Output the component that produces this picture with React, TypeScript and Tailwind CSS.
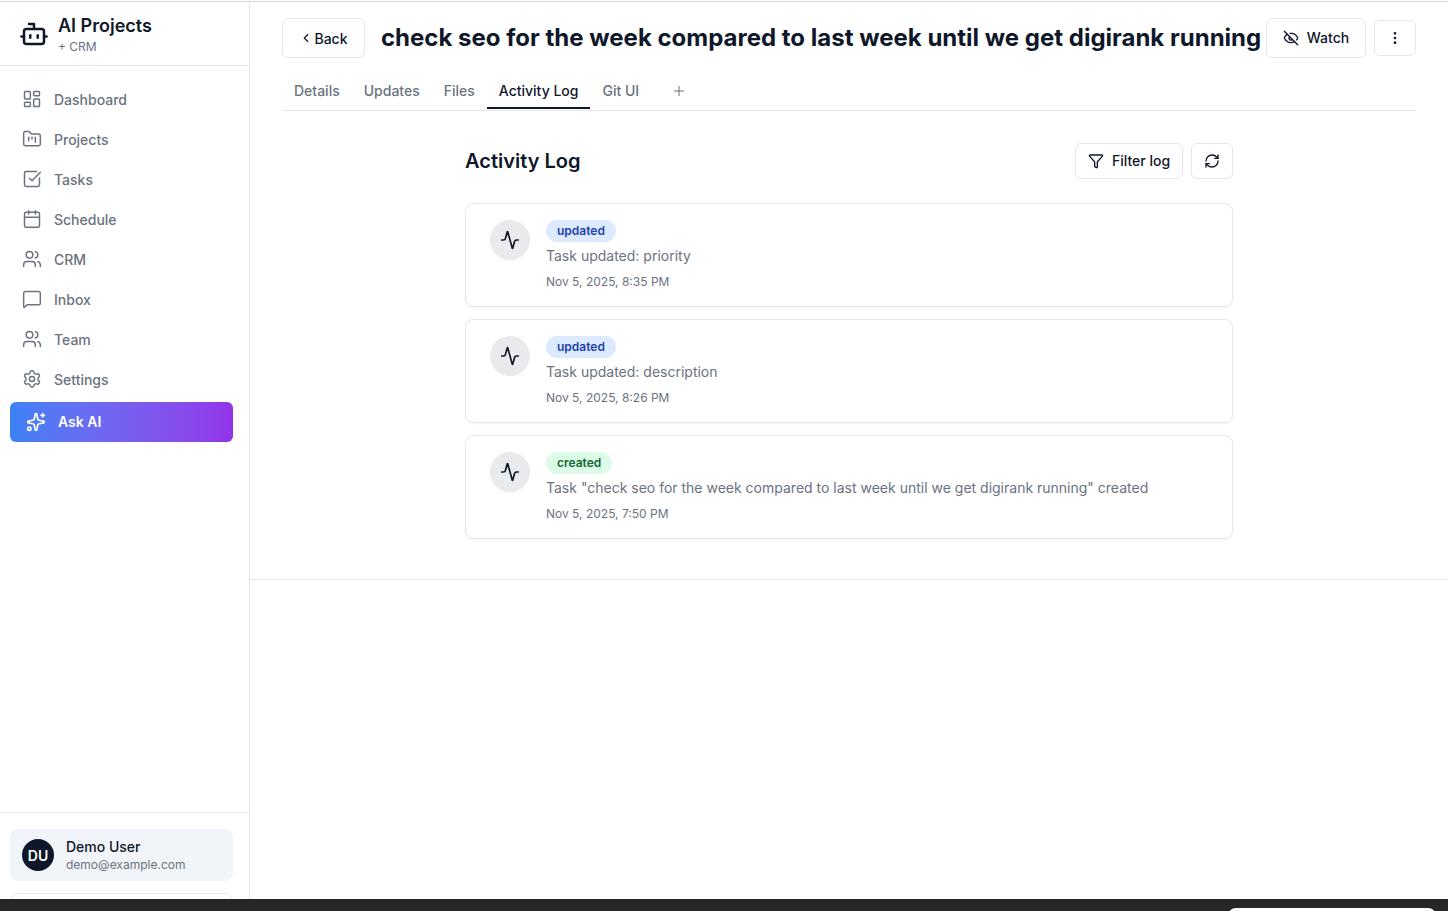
import {
  Activity,
  Bot,
  Calendar,
  ChevronLeft,
  EllipsisVertical,
  EyeOff,
  Filter,
  FolderKanban,
  LayoutDashboard,
  MessageSquare,
  Plus,
  RefreshCw,
  Settings,
  Sparkles,
  SquareCheckBig,
  Users,
} from "lucide-react";

const navItems = [
  { label: "Dashboard", icon: LayoutDashboard },
  { label: "Projects", icon: FolderKanban },
  { label: "Tasks", icon: SquareCheckBig },
  { label: "Schedule", icon: Calendar },
  { label: "CRM", icon: Users },
  { label: "Inbox", icon: MessageSquare },
  { label: "Team", icon: Users },
  { label: "Settings", icon: Settings },
];

const tabs = ["Details", "Updates", "Files", "Activity Log", "Git UI"];

const logs = [
  {
    kind: "updated",
    text: "Task updated: priority",
    date: "Nov 5, 2025, 8:35 PM",
  },
  {
    kind: "updated",
    text: "Task updated: description",
    date: "Nov 5, 2025, 8:26 PM",
  },
  {
    kind: "created",
    text: 'Task "check seo for the week compared to last week until we get digirank running" created',
    date: "Nov 5, 2025, 7:50 PM",
  },
];

const Sidebar = () => (
  <aside className="flex w-[250px] shrink-0 flex-col border-r border-[#e5e7eb] bg-white">
    <div className="flex h-[64px] shrink-0 items-center gap-[9px] border-b border-[#e5e7eb] pl-[19px]">
      <Bot size={30} strokeWidth={2} className="text-[#0f172a]" />
      <div className="pt-[2px]">
        <div className="text-[18px] leading-[24px] font-semibold text-[#0f172a]">
          AI Projects
        </div>
        <div className="mt-[1px] text-[12px] leading-[16px] text-[#6b7280]">
          + CRM
        </div>
      </div>
    </div>
    <nav className="flex flex-col pt-[13px] pl-[10px] pr-[16px]">
      {navItems.map((item) => (
        <div
          key={item.label}
          className="flex h-[40px] items-center gap-[12px] pl-[12px] text-[14px] font-medium text-[#6b7280]"
        >
          <item.icon size={20} strokeWidth={1.75} />
          <span>{item.label}</span>
        </div>
      ))}
      <div className="mt-[3px] flex h-[40px] items-center gap-[12px] rounded-[6px] bg-gradient-to-r from-[#3b82f6] to-[#9333ea] pl-[16px] text-[14px] font-semibold text-white">
        <Sparkles size={20} strokeWidth={2} />
        <span className="-mt-[1px]">Ask AI</span>
      </div>
    </nav>
    <div className="mt-auto h-[87px] shrink-0 overflow-hidden border-t border-[#e5e7eb] pt-[16px] pl-[10px] pr-[16px]">
      <div className="flex h-[52px] items-center gap-[12px] rounded-[8px] bg-[#f1f5f9] pl-[12px]">
        <div className="flex h-[32px] w-[32px] items-center justify-center rounded-full bg-[#0f172a] text-[14px] font-semibold text-white">
          DU
        </div>
        <div className="pt-[2px]">
          <div className="text-[14px] leading-[18px] font-medium text-[#0f172a]">
            Demo User
          </div>
          <div className="text-[12px] leading-[18px] text-[#6b7280]">
            demo@example.com
          </div>
        </div>
      </div>
      <div className="mt-[12px] h-[40px] rounded-[8px] border border-[#e5e7eb]" />
    </div>
  </aside>
);

const Header = () => (
  <div className="px-[32px] pt-[16px]">
    <div className="flex items-center">
      <button className="flex h-[40px] w-[83px] items-center justify-center gap-[1px] rounded-[6px] border border-[#e5e7eb] text-[14px] font-medium text-[#0f172a]">
        <ChevronLeft size={14} strokeWidth={2} />
        Back
      </button>
      <h1 className="ml-[16px] text-[24px] leading-[32px] font-bold whitespace-nowrap text-[#0f172a]">
        check seo for the week compared to last week until we get digirank running
      </h1>
      <button className="ml-auto flex h-[40px] w-[100px] items-center justify-center gap-[8px] rounded-[6px] border border-[#e5e7eb] text-[14px] font-medium text-[#0f172a]">
        <EyeOff size={16} strokeWidth={2} />
        <span className="-mt-[1px]">Watch</span>
      </button>
      <button className="ml-[8px] flex h-[36px] w-[42px] items-center justify-center rounded-[6px] border border-[#e5e7eb] text-[#0f172a]">
        <EllipsisVertical size={16} strokeWidth={2} />
      </button>
    </div>
    <div className="mt-[13px] flex h-[40px] items-stretch border-b border-[#e5e7eb]">
      {tabs.map((tab) => (
        <div
          key={tab}
          className={
            tab === "Activity Log"
              ? "flex h-[38px] items-center border-b-2 border-[#0f172a] px-[12px] pt-[3px] text-[14px] font-medium text-[#0f172a]"
              : "flex h-[38px] items-center px-[12px] pt-[1px] text-[14px] font-medium text-[#6b7280]"
          }
        >
          {tab}
        </div>
      ))}
      <div className="ml-[20px] flex h-[39px] items-center text-[#6b7280]">
        <Plus size={16} strokeWidth={1.5} />
      </div>
    </div>
  </div>
);

const ActivityLog = () => (
  <section className="border-b border-[#e5e7eb] pb-[40px]">
    <div className="mx-auto w-[768px] pt-[32px]">
      <div className="flex h-[36px] items-center justify-between">
        <h2 className="text-[20px] leading-[28px] font-semibold text-[#0f172a]">
          Activity Log
        </h2>
        <div className="flex gap-[8px]">
          <button className="flex h-[36px] w-[108px] items-center justify-center gap-[8px] rounded-[6px] border border-[#e5e7eb] text-[14px] font-medium text-[#0f172a]">
            <Filter size={16} strokeWidth={2} />
            <span className="-mt-[1px]">Filter log</span>
          </button>
          <button className="flex h-[36px] w-[42px] items-center justify-center rounded-[6px] border border-[#e5e7eb] text-[#0f172a]">
            <RefreshCw size={16} strokeWidth={2} />
          </button>
        </div>
      </div>
      <div className="mt-[24px] flex flex-col gap-[12px]">
        {logs.map((log) => (
          <div
            key={log.date}
            className="flex h-[104px] gap-[16px] rounded-[8px] border border-[#e5e7eb] pt-[16px] pl-[24px] shadow-[0_1px_2px_rgba(0,0,0,0.05)]"
          >
            <div className="flex h-[40px] w-[40px] items-center justify-center rounded-full bg-[#e9eaec] text-[#0f172a]">
              <Activity size={20} strokeWidth={2} />
            </div>
            <div>
              <span
                className={
                  log.kind === "updated"
                    ? "flex h-[22px] w-fit items-center rounded-full bg-[#dbeafe] px-[11px] text-[12px] font-semibold text-[#1e40af]"
                    : "flex h-[22px] w-fit items-center rounded-full bg-[#dcfce7] px-[11px] text-[12px] font-semibold text-[#166534]"
                }
              >
                {log.kind}
              </span>
              <p className="mt-[4px] text-[14px] leading-[20px] text-[#6b7280]">
                {log.text}
              </p>
              <p className="mt-[8px] text-[12px] leading-[16px] text-[#6b7280]">
                {log.date}
              </p>
            </div>
          </div>
        ))}
      </div>
    </div>
  </section>
);

export default function App() {
  return (
    <div className="relative flex h-[911px] flex-col overflow-hidden bg-white pt-[1px] font-['Inter',sans-serif]">
      <div className="flex h-[898px] shrink-0 border-t border-[#d4d4d4]">
        <Sidebar />
        <main className="min-w-0 flex-1">
          <Header />
          <ActivityLog />
        </main>
      </div>
      <div className="h-[12px] shrink-0 bg-[#262626]" />
      <div className="absolute right-[12px] -bottom-[9px] h-[12px] w-[208px] rounded-t-[8px] bg-white" />
    </div>
  );
}
